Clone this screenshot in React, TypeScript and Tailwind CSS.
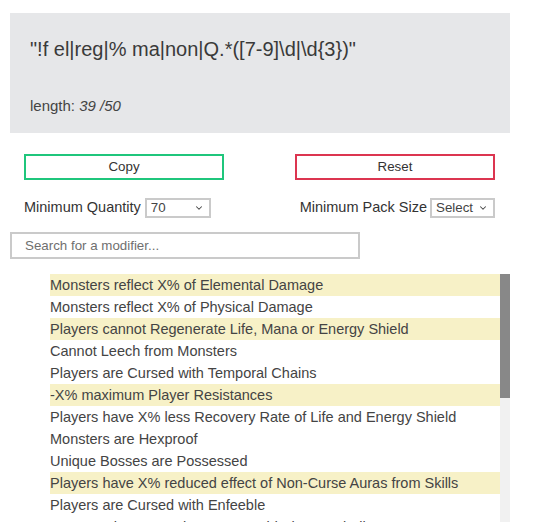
import { ChevronDown } from "lucide-react"

const mods: { text: string; hl?: boolean }[] = [
  { text: "Monsters reflect X% of Elemental Damage", hl: true },
  { text: "Monsters reflect X% of Physical Damage" },
  { text: "Players cannot Regenerate Life, Mana or Energy Shield", hl: true },
  { text: "Cannot Leech from Monsters" },
  { text: "Players are Cursed with Temporal Chains" },
  { text: "-X% maximum Player Resistances", hl: true },
  { text: "Players have X% less Recovery Rate of Life and Energy Shield" },
  { text: "Monsters are Hexproof" },
  { text: "Unique Bosses are Possessed" },
  { text: "Players have X% reduced effect of Non-Curse Auras from Skills", hl: true },
  { text: "Players are Cursed with Enfeeble" },
  { text: "Monsters have X% chance to Avoid Elemental Ailments" },
  { text: "Players are Cursed with Vulnerability" },
  { text: "Players are Cursed with Elemental Weakness" },
]

function Select({ value, width }: { value: string; width: string }) {
  return (
    <div className={`relative h-[20px] border-2 border-[#cacaca] bg-white ${width}`}>
      <span className="block pl-[4px] text-[13.33px] leading-[16px] text-[#444]">{value}</span>
      <ChevronDown
        className="absolute right-[5px] top-[3px] h-[10px] w-[10px] text-[#444]"
        strokeWidth={2.5}
      />
    </div>
  )
}

export default function App() {
  return (
    <div className="h-[522px] overflow-hidden bg-white font-['Liberation_Sans',Arial,sans-serif] text-[#333]">
      <div className="ml-[10px] w-[500px] pt-[13px]">
        <div className="flex h-[120px] flex-col bg-[#e6e7e9] px-5 pt-[22px]">
          <p className="text-[20px] leading-[28px] text-[#3a3a3a]">
            "!f el|reg|% ma|non|Q.*([7-9]\d|\d{"{"}3{"}"})"
          </p>
          <p className="mt-[33px] text-[15px] leading-[20px] text-[#444]">
            length: <i>39 /50</i>
          </p>
        </div>

        <div className="mt-[21px] flex justify-between pl-[14px] pr-[15px]">
          <button
            type="button"
            className="h-[26px] w-[200px] border-2 border-[#1fc67c] bg-white text-[13.33px] text-[#333]"
          >
            Copy
          </button>
          <button
            type="button"
            className="h-[26px] w-[200px] border-2 border-[#dc3550] bg-white text-[13.33px] text-[#333]"
          >
            Reset
          </button>
        </div>

        <div className="mt-[18px] flex h-[20px] items-center justify-between pl-[14px] pr-[15px] text-[14.5px] text-[#333]">
          <div className="flex items-center gap-[4px]">
            <span>Minimum Quantity</span>
            <Select value="70" width="w-[66px]" />
          </div>
          <div className="flex items-center gap-[3px]">
            <span>Minimum Pack Size</span>
            <Select value="Select" width="w-[65px]" />
          </div>
        </div>

        <input
          type="text"
          placeholder="Search for a modifier..."
          className="mt-[14px] block h-[27px] w-[350px] border-2 border-[#cacaca] bg-white pl-[13px] text-[13.33px] text-[#333] outline-none placeholder:text-[#6f6f6f]"
        />

        <div className="mt-[15px] flex h-[248px] overflow-hidden pl-10">
          <ul className="flex-1">
            {mods.map((m) => (
              <li
                key={m.text}
                className={`h-[22px] whitespace-nowrap text-[14.5px] leading-[22px] text-[#444] ${m.hl ? "bg-[#f7f1c7]" : ""}`}
              >
                {m.text}
              </li>
            ))}
          </ul>
          {/* scrollbar */}
          <div className="flex w-[10px] flex-col bg-[#f1f1f1]">
            <div className="h-[124px] bg-[#888]" />
          </div>
        </div>
      </div>
    </div>
  )
}
